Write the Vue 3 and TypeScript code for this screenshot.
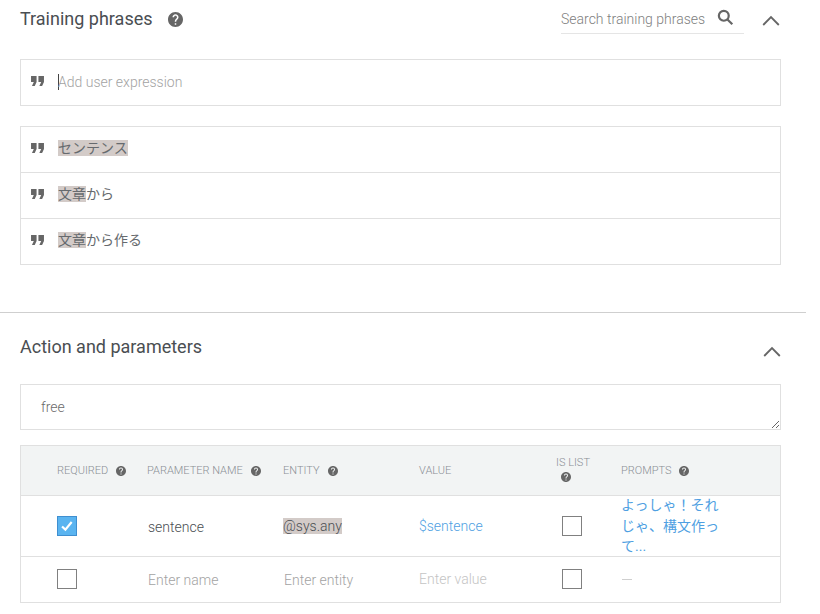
<script setup lang="ts">
const helpPath = 'M12 2C6.48 2 2 6.48 2 12s4.48 10 10 10 10-4.48 10-10S17.52 2 12 2zm1 17h-2v-2h2v2zm2.07-7.75l-.9.92C13.45 12.9 13 13.5 13 15h-2v-.5c0-1.1.45-2.1 1.17-2.83l1.24-1.26c.37-.36.59-.86.59-1.41 0-1.1-.9-2-2-2s-2 .9-2 2H8c0-2.21 1.79-4 4-4s4 1.79 4 4c0 .88-.36 1.68-.93 2.25z'
const quotePath = 'M5 6h6v6.500L9 17H6l2-4.500H5zM13 6h6v6.500L17 17h-3l2-4.500h-3z'
const phrases = [
  { mark: 'センテンス', rest: '' },
  { mark: '文章', rest: 'から' },
  { mark: '文章', rest: 'から作る' },
]
</script>

<template>
  <div class="page">
    <section class="training">
      <header class="head">
        <h2 class="title">Training phrases</h2>
        <svg class="help-big" viewBox="2 2 20 20"><path :d="helpPath" /></svg>
        <div class="search">
          <span class="search-text">Search training phrases</span>
          <svg class="search-icon" viewBox="0 0 20 20"><circle cx="8" cy="8" r="5.800" /><path d="M12 12l6 6" /></svg>
        </div>
        <svg class="chevron" viewBox="0 0 18 11"><path d="M1.200 10L9 2l7.800 8" /></svg>
      </header>

      <div class="box add-row">
        <svg class="quote" viewBox="4 5 16 13"><path :d="quotePath" /></svg>
        <span class="caret"></span>
        <span class="placeholder">Add user expression</span>
      </div>

      <ul class="box phrase-list">
        <li v-for="p in phrases" :key="p.mark + p.rest" class="phrase">
          <svg class="quote" viewBox="4 5 16 13"><path :d="quotePath" /></svg>
          <span class="phrase-text"><mark class="hl">{{ p.mark }}</mark>{{ p.rest }}</span>
        </li>
      </ul>
    </section>

    <section class="action">
      <header class="head action-head">
        <h2 class="title">Action and parameters</h2>
        <svg class="chevron" viewBox="0 0 18 11"><path d="M1.200 10L9 2l7.800 8" /></svg>
      </header>

      <textarea class="action-input" readonly>free</textarea>

      <div class="table">
        <div class="grid thead">
          <div class="th">REQUIRED<svg class="help" viewBox="2 2 20 20"><path :d="helpPath" /></svg></div>
          <div class="th">PARAMETER NAME<svg class="help" viewBox="2 2 20 20"><path :d="helpPath" /></svg></div>
          <div class="th">ENTITY<svg class="help" viewBox="2 2 20 20"><path :d="helpPath" /></svg></div>
          <div class="th">VALUE</div>
          <div class="th th-list">IS LIST<svg class="help" viewBox="2 2 20 20"><path :d="helpPath" /></svg></div>
          <div class="th">PROMPTS<svg class="help prompts-help" viewBox="2 2 20 20"><path :d="helpPath" /></svg></div>
        </div>
        <div class="grid row row-one">
          <div>
            <span class="check checked">
              <svg viewBox="0 0 20 20"><path d="M4.500 10.500l3.700 3.500 7-8.500" /></svg>
            </span>
          </div>
          <div class="cell name">sentence</div>
          <div class="cell"><mark class="hl">@sys.any</mark></div>
          <div class="cell link">$sentence</div>
          <div class="list-cell"><span class="check"></span></div>
          <div class="prompt">よっしゃ！それじゃ、構文作って...</div>
        </div>
        <div class="grid row row-two">
          <div class="raised"><span class="check"></span></div>
          <div class="cell muted name">Enter name</div>
          <div class="cell muted entity">Enter entity</div>
          <div class="cell lighter raised">Enter value</div>
          <div class="list-cell raised"><span class="check"></span></div>
          <div class="dash raised"></div>
        </div>
      </div>
    </section>
  </div>
</template>

<style scoped>
.page {
  width: 820px;
  height: 614px;
  overflow: hidden;
  background: #fff;
  font-family: Roboto, "Noto Sans CJK JP", sans-serif;
  color: #5f6368;
}
.training {
  width: 806px;
  height: 313px;
  box-sizing: border-box;
  padding: 0 25px 0 20px;
  border-bottom: 1px solid #cfcfcf;
}
.head {
  display: flex;
  align-items: center;
  height: 38px;
}
.title {
  margin: 0;
  font-size: 18px;
  font-weight: 400;
  line-height: 38px;
  color: #4a4e52;
}
.help-big {
  width: 15px;
  height: 15px;
  margin-left: 15px;
  fill: #666;
}
.search {
  display: flex;
  align-items: flex-start;
  justify-content: space-between;
  box-sizing: border-box;
  width: 183px;
  height: 34px;
  margin-left: auto;
  margin-bottom: 4px;
  padding-top: 11px;
  border-bottom: 1px solid #e5e5e5;
}
.search-text {
  font-size: 14px;
  line-height: 16px;
  font-weight: 300;
  color: #808080;
}
.search-icon {
  width: 17px;
  height: 17px;
  margin-right: 10px;
  margin-top: -2px;
  fill: none;
  stroke: #666;
  stroke-width: 2.600;
}
.chevron {
  width: 18px;
  height: 11px;
  margin-left: 18px;
  margin-right: 1px;
  margin-top: 2px;
  flex: none;
  fill: none;
  stroke: #666;
  stroke-width: 1.800;
}
.box {
  box-sizing: border-box;
  width: 761px;
  border: 1px solid #e0e0e0;
}
.add-row {
  display: flex;
  align-items: center;
  height: 47px;
  margin-top: 21px;
  padding-left: 9px;
}
.quote {
  width: 15px;
  height: 12px;
  flex: none;
  fill: #666;
  margin-top: -3px;
}
.caret {
  width: 1px;
  height: 16px;
  margin: -1px -1px 0 13px;
  background: #444;
}
.placeholder {
  font-size: 14px;
  font-weight: 300;
  color: #a3a3a3;
  margin-top: -2px;
}
.phrase-list {
  list-style: none;
  margin: 20px 0 0;
  padding: 0;
}
.phrase {
  display: flex;
  align-items: center;
  height: 46px;
  box-sizing: border-box;
  padding-left: 9px;
  border-bottom: 1px solid #e0e0e0;
}
.phrase:last-child {
  height: 45px;
  border-bottom: 0;
}
.phrase-text {
  margin-left: 13px;
  margin-top: -3px;
  font-size: 14px;
  line-height: 18px;
  color: #666a6e;
}
.hl {
  background: #d3cbc8;
  color: inherit;
}
.action {
  padding: 0 0 0 20px;
}
.action-head {
  width: 761px;
  height: 70px;
  padding-bottom: 1px;
  box-sizing: border-box;
}
.action-head .title {
  line-height: 68px;
  align-self: flex-start;
}
.action-head .chevron {
  margin-left: auto;
  margin-right: 0;
  margin-top: 8px;
}
.action-input {
  display: block;
  box-sizing: border-box;
  width: 761px;
  height: 46px;
  margin: 1px 0 0;
  padding: 13px 20px;
  resize: vertical;
  border: 1px solid #e0e0e0;
  border-radius: 0;
  outline: none;
  font-family: inherit;
  font-size: 14px;
  line-height: 18px;
  font-weight: 300;
  color: #6b6b6b;
}
.table {
  box-sizing: border-box;
  width: 761px;
  height: 158px;
  margin-top: 15px;
  border: 1px solid #e0e0e0;
}
.grid {
  display: grid;
  grid-template-columns: 90px 136px 136px 137px 65px 1fr;
  align-items: center;
  padding-left: 36px;
  box-sizing: border-box;
}
.thead {
  height: 50px;
  background: #f2f4f4;
  border-bottom: 1px solid #e0e0e0;
}
.th {
  display: flex;
  align-items: center;
  font-size: 11px;
  font-weight: 300;
  color: #8a8f94;
}
.th-list {
  flex-direction: column;
  align-items: flex-start;
  width: 34px;
  line-height: 14px;
  white-space: nowrap;
  margin-top: -3px;
  gap: 2px;
}
.help {
  width: 10px;
  height: 10px;
  margin-left: 8px;
  fill: #666;
  flex: none;
}
.th-list .help {
  margin-left: 5px;
}
.prompts-help {
  margin-left: 7px;
}
.row {
  border-bottom: 1px solid #e0e0e0;
}
.row-one {
  height: 61px;
  grid-template-rows: 60px;
}
.row-one .name {
  margin-top: 2px;
}
.row-two {
  height: 46px;
  border-bottom: 0;
}
.raised {
  margin-top: -2px;
}
.check {
  display: block;
  box-sizing: border-box;
  width: 20px;
  height: 20px;
  border: 1px solid #808080;
}
.check svg {
  display: block;
  width: 18px;
  height: 18px;
  fill: none;
  stroke: #fff;
  stroke-width: 2.400;
}
.checked {
  background: #5ab4f0;
  border-color: #3f8fd0;
}
.list-cell .check {
  margin-left: 6px;
}
.cell {
  font-size: 14px;
  line-height: 18px;
  font-weight: 300;
  color: #4a4e52;
}
.name {
  margin-left: 1px;
}
.entity {
  margin-left: 1px;
}
.link {
  color: #4f9fe2;
}
.muted {
  color: #a3a3a3;
}
.lighter {
  color: #c4c4c4;
}
.prompt {
  width: 100px;
  font-size: 14px;
  line-height: 20.500px;
  color: #4f9fe2;
}
.dash {
  width: 10px;
  height: 1px;
  margin-left: 1px;
  background: #cfcfcf;
}
</style>
